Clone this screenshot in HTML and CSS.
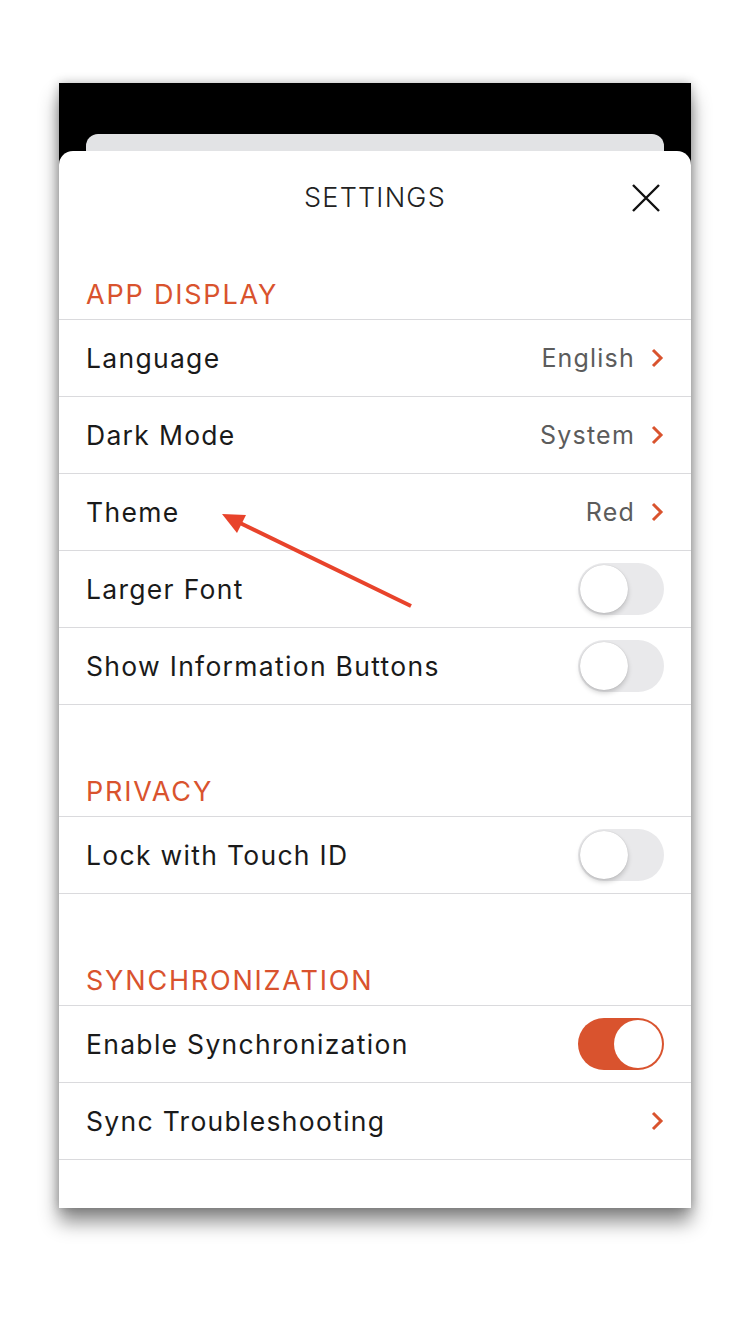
FILE: index.html
```html
<!DOCTYPE html>
<html lang="en">
<head>
    <meta charset="UTF-8">
    <meta name="viewport" content="width=device-width, initial-scale=1.0">
    <title>Settings</title>
    <link rel="stylesheet" href="styles.css">
</head>
<body>
    <div class="phone">
        <div class="sheet-behind"></div>

        <div class="sheet">
            <div class="sheet-header">
                <h1>SETTINGS</h1>
                <button class="btn-close" aria-label="Close">
                    <svg width="30" height="30" viewBox="0 0 30 30">
                        <path d="M2 2 L28 28 M28 2 L2 28" stroke="#111" stroke-width="2.4" fill="none"/>
                    </svg>
                </button>
            </div>

            <div class="seccion seccion-first">
                <h2>APP DISPLAY</h2>
            </div>
            <div class="lista">
                <div class="fila">
                    <span class="etiqueta">Language</span>
                    <span class="valor">English</span>
                    <svg class="chevron" width="14" height="20" viewBox="0 0 14 20"><path d="M3 2 L11 10 L3 18" stroke="#d9532e" stroke-width="3" fill="none"/></svg>
                </div>
                <div class="fila">
                    <span class="etiqueta">Dark Mode</span>
                    <span class="valor">System</span>
                    <svg class="chevron" width="14" height="20" viewBox="0 0 14 20"><path d="M3 2 L11 10 L3 18" stroke="#d9532e" stroke-width="3" fill="none"/></svg>
                </div>
                <div class="fila">
                    <span class="etiqueta">Theme</span>
                    <span class="valor">Red</span>
                    <svg class="chevron" width="14" height="20" viewBox="0 0 14 20"><path d="M3 2 L11 10 L3 18" stroke="#d9532e" stroke-width="3" fill="none"/></svg>
                </div>
                <div class="fila">
                    <span class="etiqueta">Larger Font</span>
                    <span class="switch"></span>
                </div>
                <div class="fila">
                    <span class="etiqueta">Show Information Buttons</span>
                    <span class="switch"></span>
                </div>
            </div>

            <div class="seccion">
                <h2>PRIVACY</h2>
            </div>
            <div class="lista">
                <div class="fila">
                    <span class="etiqueta">Lock with Touch ID</span>
                    <span class="switch"></span>
                </div>
            </div>

            <div class="seccion">
                <h2>SYNCHRONIZATION</h2>
            </div>
            <div class="lista">
                <div class="fila">
                    <span class="etiqueta">Enable Synchronization</span>
                    <span class="switch on"></span>
                </div>
                <div class="fila">
                    <span class="etiqueta">Sync Troubleshooting</span>
                    <svg class="chevron" width="14" height="20" viewBox="0 0 14 20"><path d="M3 2 L11 10 L3 18" stroke="#d9532e" stroke-width="3" fill="none"/></svg>
                </div>
            </div>
        </div>
    </div>

    <!-- flecha de anotacion sobre la captura -->
    <svg class="flecha" width="750" height="1334" viewBox="0 0 750 1334">
        <line x1="411" y1="606" x2="238" y2="522" stroke="#e8432b" stroke-width="4"/>
        <polygon points="222,514 246,515 237,533" fill="#e8432b"/>
    </svg>
</body>
</html>
```

FILE: styles.css
```css
* {
    margin: 0;
    padding: 0;
    box-sizing: border-box;
}

body {
    background: #fff;
    font-family: 'Inter', 'Noto Sans', sans-serif;
    color: #1a1a1a;
    position: relative;
    width: 750px;
    height: 1334px;
    padding: 83px 59px 0;
}

.phone {
    width: 632px;
    height: 1125px;
    background: #000;
    padding-top: 51px;
    overflow: hidden;
    box-shadow: 0 14px 18px rgba(0, 0, 0, 0.45), 0 0 10px rgba(0, 0, 0, 0.25);
}

.sheet-behind {
    height: 17px;
    margin: 0 27px;
    background: #e2e3e5;
    border-radius: 12px 12px 0 0;
}

.sheet {
    background: #fff;
    height: 1057px;
    border-radius: 14px 14px 0 0;
}

.sheet-header {
    height: 64px;
    padding-top: 30px;
    position: relative;
    text-align: center;
}

.sheet-header h1 {
    font-size: 27px;
    line-height: 34px;
    font-weight: 300;
    color: #222;
    letter-spacing: 1.2px;
}

.btn-close {
    position: absolute;
    right: 30px;
    top: 32px;
    border: none;
    background: none;
    width: 30px;
    height: 30px;
}

.btn-close svg {
    display: block;
}

.seccion {
    height: 111px;
    display: flex;
    align-items: flex-end;
    padding: 0 27px 9px;
}

.seccion-first {
    height: 104px;
}

.seccion h2 {
    font-size: 27px;
    line-height: 30px;
    font-weight: 400;
    color: #d9532e;
    letter-spacing: 1.8px;
}

.lista {
    border-top: 1px solid #dadadd;
}

.fila {
    height: 77px;
    border-bottom: 1px solid #dadadd;
    display: flex;
    align-items: center;
    padding: 0 27px;
}

.etiqueta {
    flex: 1;
    font-size: 26.5px;
    color: #1a1a1a;
    letter-spacing: 1.3px;
}

.valor {
    font-size: 25px;
    color: #5c5c5c;
    margin-right: 15px;
    letter-spacing: 1.2px;
}

.chevron {
    display: block;
}

.switch {
    width: 86px;
    height: 52px;
    border-radius: 26px;
    background: #e9e9eb;
    position: relative;
}

.switch::after {
    content: '';
    position: absolute;
    left: 2px;
    top: 2px;
    width: 48px;
    height: 48px;
    border-radius: 50%;
    background: #fff;
    box-shadow: 0 3px 5px rgba(0, 0, 0, 0.18), 0 0 1px rgba(0, 0, 0, 0.2);
}

.switch.on {
    background: #d9532e;
}

.switch.on::after {
    left: 36px;
    box-shadow: none;
}

.flecha {
    position: absolute;
    left: 0;
    top: 0;
}
```
